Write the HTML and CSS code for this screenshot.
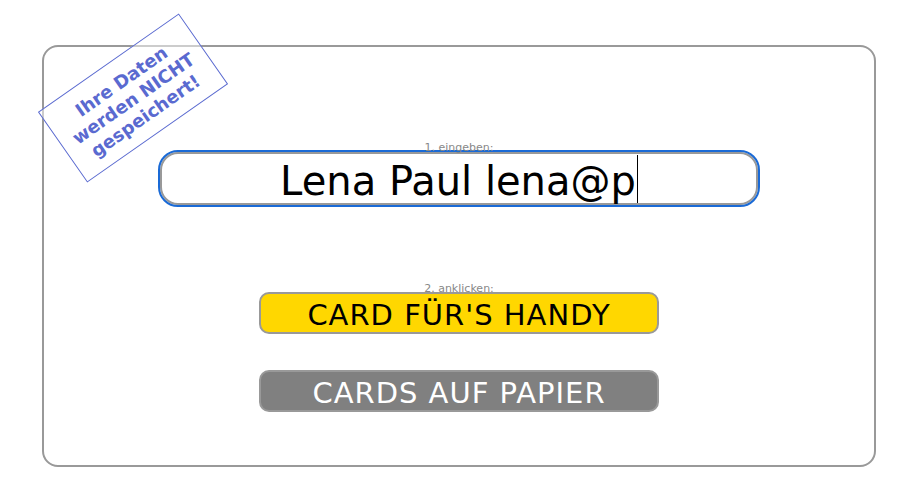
FILE: index.html
```html
<!DOCTYPE html>
<html lang="de">
<head>
<meta charset="utf-8">
<title>Cards</title>
<link rel="stylesheet" href="styles.css">
</head>
<body>
<div class="card">
  <div class="stamp">Ihre Daten<br>werden NICHT<br>gespeichert!</div>
  <div class="step">1. eingeben:</div>
  <div class="field"><span class="value">Lena Paul lena@p</span><span class="caret"></span></div>
  <div class="step step2">2. anklicken:</div>
  <div class="btn btn-yellow">CARD FÜR'S HANDY</div>
  <div class="btn btn-gray">CARDS AUF PAPIER</div>
</div>
</body>
</html>
```
FILE: styles.css
```css
html, body { margin: 0; padding: 0; background: #fff; }
body { font-family: "DejaVu Sans", Verdana, sans-serif; }
.card {
  position: relative;
  box-sizing: border-box;
  margin: 45px 37px 0 42px;
  height: 422px;
  border: 2px solid #999;
  border-radius: 16px;
  display: flex;
  flex-direction: column;
  align-items: center;
  padding-top: 96px;
}
.step {
  font-size: 11px;
  line-height: 9px;
  height: 9px;
  color: #888;
  position: relative;
  z-index: 1;
}
.field {
  box-sizing: border-box;
  width: 602px;
  height: 57px;
  border: 2px solid #1a6ad6;
  border-radius: 20px;
  box-shadow: inset 0 0 0 2px #999;
  display: flex;
  justify-content: center;
  align-items: center;
  padding-top: 4px;
  font-family: "DejaVu Sans", Verdana, sans-serif;
  font-size: 40px;
  color: #000;
  margin-top: -2px;
}
.caret {
  display: inline-block;
  width: 1px;
  height: 48px;
  background: #000;
  margin-left: 1px;
  margin-top: -4px;
}
.step2 { margin-top: 77px; }
.btn {
  box-sizing: border-box;
  width: 400px;
  height: 42px;
  border: 2px solid #999;
  border-radius: 10px;
  display: flex;
  justify-content: center;
  align-items: center;
  padding-top: 3px;
  font-family: "DejaVu Sans", Verdana, sans-serif;
  font-size: 29px;
  letter-spacing: 1px;
}
.btn-yellow { background: #ffd700; color: #000; margin-top: -1px; }
.btn-gray { background: #808080; color: #fff; margin-top: 36px; }
.stamp {
  position: absolute;
  left: 3px;
  top: 8px;
  width: 172px;
  height: 86px;
  box-sizing: border-box;
  border: 1.5px solid #5a6ad0;
  color: #5a6ad0;
  background: rgba(255,255,255,0.5);
  transform: rotate(-35deg);
  display: flex;
  align-items: center;
  justify-content: center;
  text-align: center;
  font-weight: bold;
  font-size: 18px;
  line-height: 21px;
  z-index: 2;
}
```
